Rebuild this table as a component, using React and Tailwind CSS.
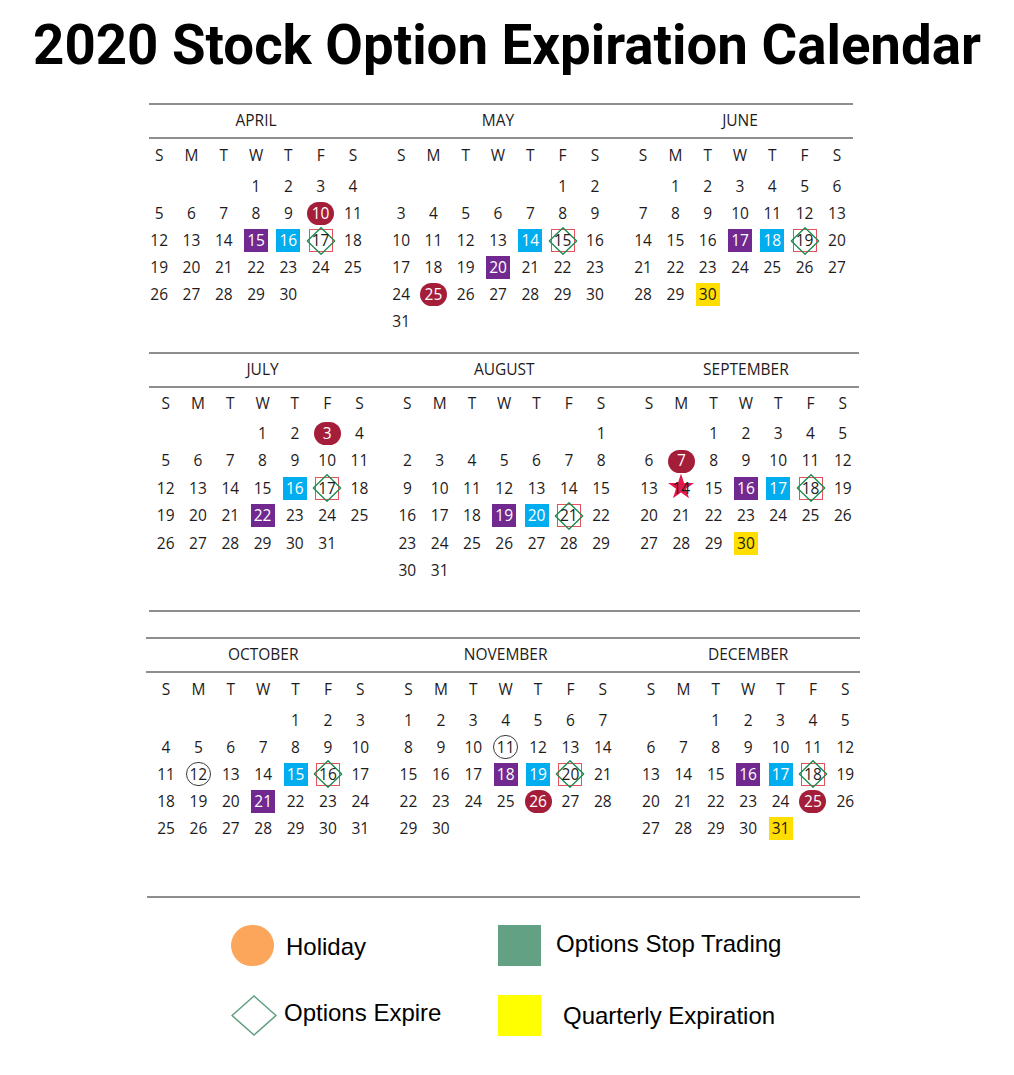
import React from "react";

// 2020 stock option expiration calendar

const MONTHS = [
  { name: "APRIL", start: 3, days: 30, marks: { 10: "holiday", 15: "purple", 16: "blue", 17: "expire" } },
  { name: "MAY", start: 5, days: 31, marks: { 14: "blue", 15: "expire", 20: "purple", 25: "holiday" } },
  { name: "JUNE", start: 1, days: 30, marks: { 17: "purple", 18: "blue", 19: "expire", 30: "yellow" } },
  { name: "JULY", start: 3, days: 31, marks: { 3: "holiday", 16: "blue", 17: "expire", 22: "purple" } },
  { name: "AUGUST", start: 6, days: 31, marks: { 19: "purple", 20: "blue", 21: "expire" } },
  { name: "SEPTEMBER", start: 2, days: 30, marks: { 7: "holiday", 14: "star", 16: "purple", 17: "blue", 18: "expire", 30: "yellow" } },
  { name: "OCTOBER", start: 4, days: 31, marks: { 12: "ring", 15: "blue", 16: "expire", 21: "purple" } },
  { name: "NOVEMBER", start: 0, days: 30, marks: { 11: "ring", 18: "purple", 19: "blue", 20: "expire", 26: "holiday" } },
  { name: "DECEMBER", start: 2, days: 31, marks: { 16: "purple", 17: "blue", 18: "expire", 25: "holiday", 31: "yellow" } },
];

const LETTERS = ["S", "M", "T", "W", "T", "F", "S"];

const BANDS = [
  {
    months: MONTHS.slice(0, 3),
    line: "ml-[149px] w-[704px]",
    row: "flex pl-[143px] gap-x-[15.9px]",
    width: "w-[226.1px]",
    grid: "grid grid-cols-[repeat(7,32.3px)] w-[226.1px] h-[34px]",
    rows: "grid grid-cols-[repeat(7,32.3px)] auto-rows-[27px] w-[226.1px]",
    wrap: "mt-[30px]",
  },
  {
    months: MONTHS.slice(3, 6),
    line: "ml-[149px] w-[710px]",
    row: "flex pl-[149.5px] gap-x-[15.6px]",
    width: "w-[226.1px]",
    grid: "grid grid-cols-[repeat(7,32.3px)] w-[226.1px] h-[32px]",
    rows: "grid grid-cols-[repeat(7,32.3px)] auto-rows-[27.4px] w-[226.1px]",
    wrap: "mt-[17px]",
  },
  {
    months: MONTHS.slice(6, 9),
    line: "ml-[146px] w-[714px]",
    row: "flex pl-[149.8px] gap-x-[15.7px]",
    width: "w-[226.8px]",
    grid: "grid grid-cols-[repeat(7,32.4px)] w-[226.8px] h-[34px]",
    rows: "grid grid-cols-[repeat(7,32.4px)] auto-rows-[27px] w-[226.8px]",
    wrap: "mt-[25px]",
  },
];

const Line = ({ cls }) => <div className={`h-[2px] bg-[#8e8e8e] ${cls}`} />;

const Star = () => (
  <svg width="26" height="25" viewBox="0 0 26 25" className="absolute left-1/2 top-1/2 -translate-x-1/2 -translate-y-[58%]">
    <polygon
      points="13,0 16.07,9.45 26,9.45 17.96,15.28 21.04,24.73 13,18.89 4.96,24.73 8.04,15.28 0,9.45 9.93,9.45"
      fill="#e3194c"
    />
  </svg>
);

const Day = ({ d, mark }) => {
  if (!d) return <div />;
  let inner = <span>{d}</span>;

  if (mark === "purple") {
    inner = <span className="flex h-[23px] w-[24px] items-center justify-center bg-[#71298f] text-white">{d}</span>;
  } else if (mark === "blue") {
    inner = <span className="flex h-[23px] w-[24px] items-center justify-center bg-[#00adee] text-white">{d}</span>;
  } else if (mark === "yellow") {
    inner = <span className="flex h-[23px] w-[24px] items-center justify-center bg-[#ffde00]">{d}</span>;
  } else if (mark === "holiday") {
    inner = <span className="flex h-[23px] w-[27px] items-center justify-center rounded-full bg-[#a41e3a] text-white">{d}</span>;
  } else if (mark === "ring") {
    inner = <span className="flex h-[24px] w-[25px] items-center justify-center rounded-full border border-[#3a3a3a]">{d}</span>;
  } else if (mark === "expire") {
    inner = (
      <span className="relative flex h-[23px] w-[24px] items-center justify-center border-[1.5px] border-[#e4525d]">
        <svg width="29" height="28" viewBox="0 0 29 28" className="absolute left-1/2 top-1/2 -translate-x-1/2 -translate-y-1/2">
          <polygon points="14.5,0.8 28.2,14 14.5,27.2 0.8,14" fill="none" stroke="#1d8a4e" strokeWidth="1.4" />
        </svg>
        <span className="relative">{d}</span>
      </span>
    );
  } else if (mark === "star") {
    inner = (
      <span className="relative flex h-[23px] w-[26px] items-center justify-center">
        <Star />
        <span className="relative">{d}</span>
      </span>
    );
  }

  return <div className="flex items-center justify-center">{inner}</div>;
};

const MonthGrid = ({ month, band }) => {
  const cells = [];
  for (let i = 0; i < month.start; i++) cells.push(null);
  for (let d = 1; d <= month.days; d++) cells.push(d);

  return (
    <div>
      <div className={`${band.grid} items-center`}>
        {LETTERS.map((l, i) => (
          <div key={i} className="text-center">{l}</div>
        ))}
      </div>
      <div className={band.rows}>
        {cells.map((d, i) => (
          <Day key={i} d={d} mark={d ? month.marks[d] : null} />
        ))}
      </div>
    </div>
  );
};

const Band = ({ band }) => (
  <div className={band.wrap}>
    <Line cls={band.line} />
    <div className={`${band.row} h-[32px] items-center`}>
      {band.months.map((m) => (
        <div key={m.name} className={`${band.width} text-center`}>{m.name}</div>
      ))}
    </div>
    <Line cls={band.line} />
    <div className={band.row}>
      {band.months.map((m) => (
        <MonthGrid key={m.name} month={m} band={band} />
      ))}
    </div>
  </div>
);

export default function App() {
  return (
    <div className="min-h-[1075px] w-[1014px] bg-white">
      <h1 className="origin-center scale-x-[0.975] pt-[17px] text-center font-['Roboto',sans-serif] text-[56px] font-bold leading-[56px] text-black">
        2020 Stock Option Expiration Calendar
      </h1>

      <div className="font-['Open_Sans','Noto_Sans',sans-serif] text-[15.5px] text-[#1f1b1c]">
        <Band band={BANDS[0]} />
        <Band band={BANDS[1]} />
        <div className="mt-[25.6px]">
          <Line cls="ml-[149px] w-[711px]" />
        </div>
        <Band band={BANDS[2]} />
        <div className="mt-[54px]">
          <Line cls="ml-[147px] w-[713px]" />
        </div>
      </div>

      {/* legend */}
      <div className="mt-[27px] grid grid-cols-[267px_auto] gap-y-[29px] pl-[231px] font-['Liberation_Sans',Arial,sans-serif] text-[24px] text-black">
        <div className="flex h-[41px] items-center">
          <div className="h-[41px] w-[43px] rounded-full bg-[#fba65b]" />
          <span className="ml-[12px] mt-[4px]">Holiday</span>
        </div>
        <div className="flex h-[41px] items-center">
          <div className="h-[41px] w-[43px] bg-[#62a183]" />
          <span className="ml-[15px] -mt-[2px]">Options Stop Trading</span>
        </div>
        <div className="flex h-[41px] items-center">
          <svg width="46" height="41" viewBox="0 0 46 41">
            <polygon points="23,1 45,20.5 23,40 1,20.5" fill="none" stroke="#5e9f7e" strokeWidth="1.5" />
          </svg>
          <span className="ml-[7px] -mt-[4px]">Options Expire</span>
        </div>
        <div className="flex h-[41px] items-center">
          <div className="h-[41px] w-[43px] bg-[#ffff00]" />
          <span className="ml-[22px] mt-[2px]">Quarterly Expiration</span>
        </div>
      </div>
    </div>
  );
}
